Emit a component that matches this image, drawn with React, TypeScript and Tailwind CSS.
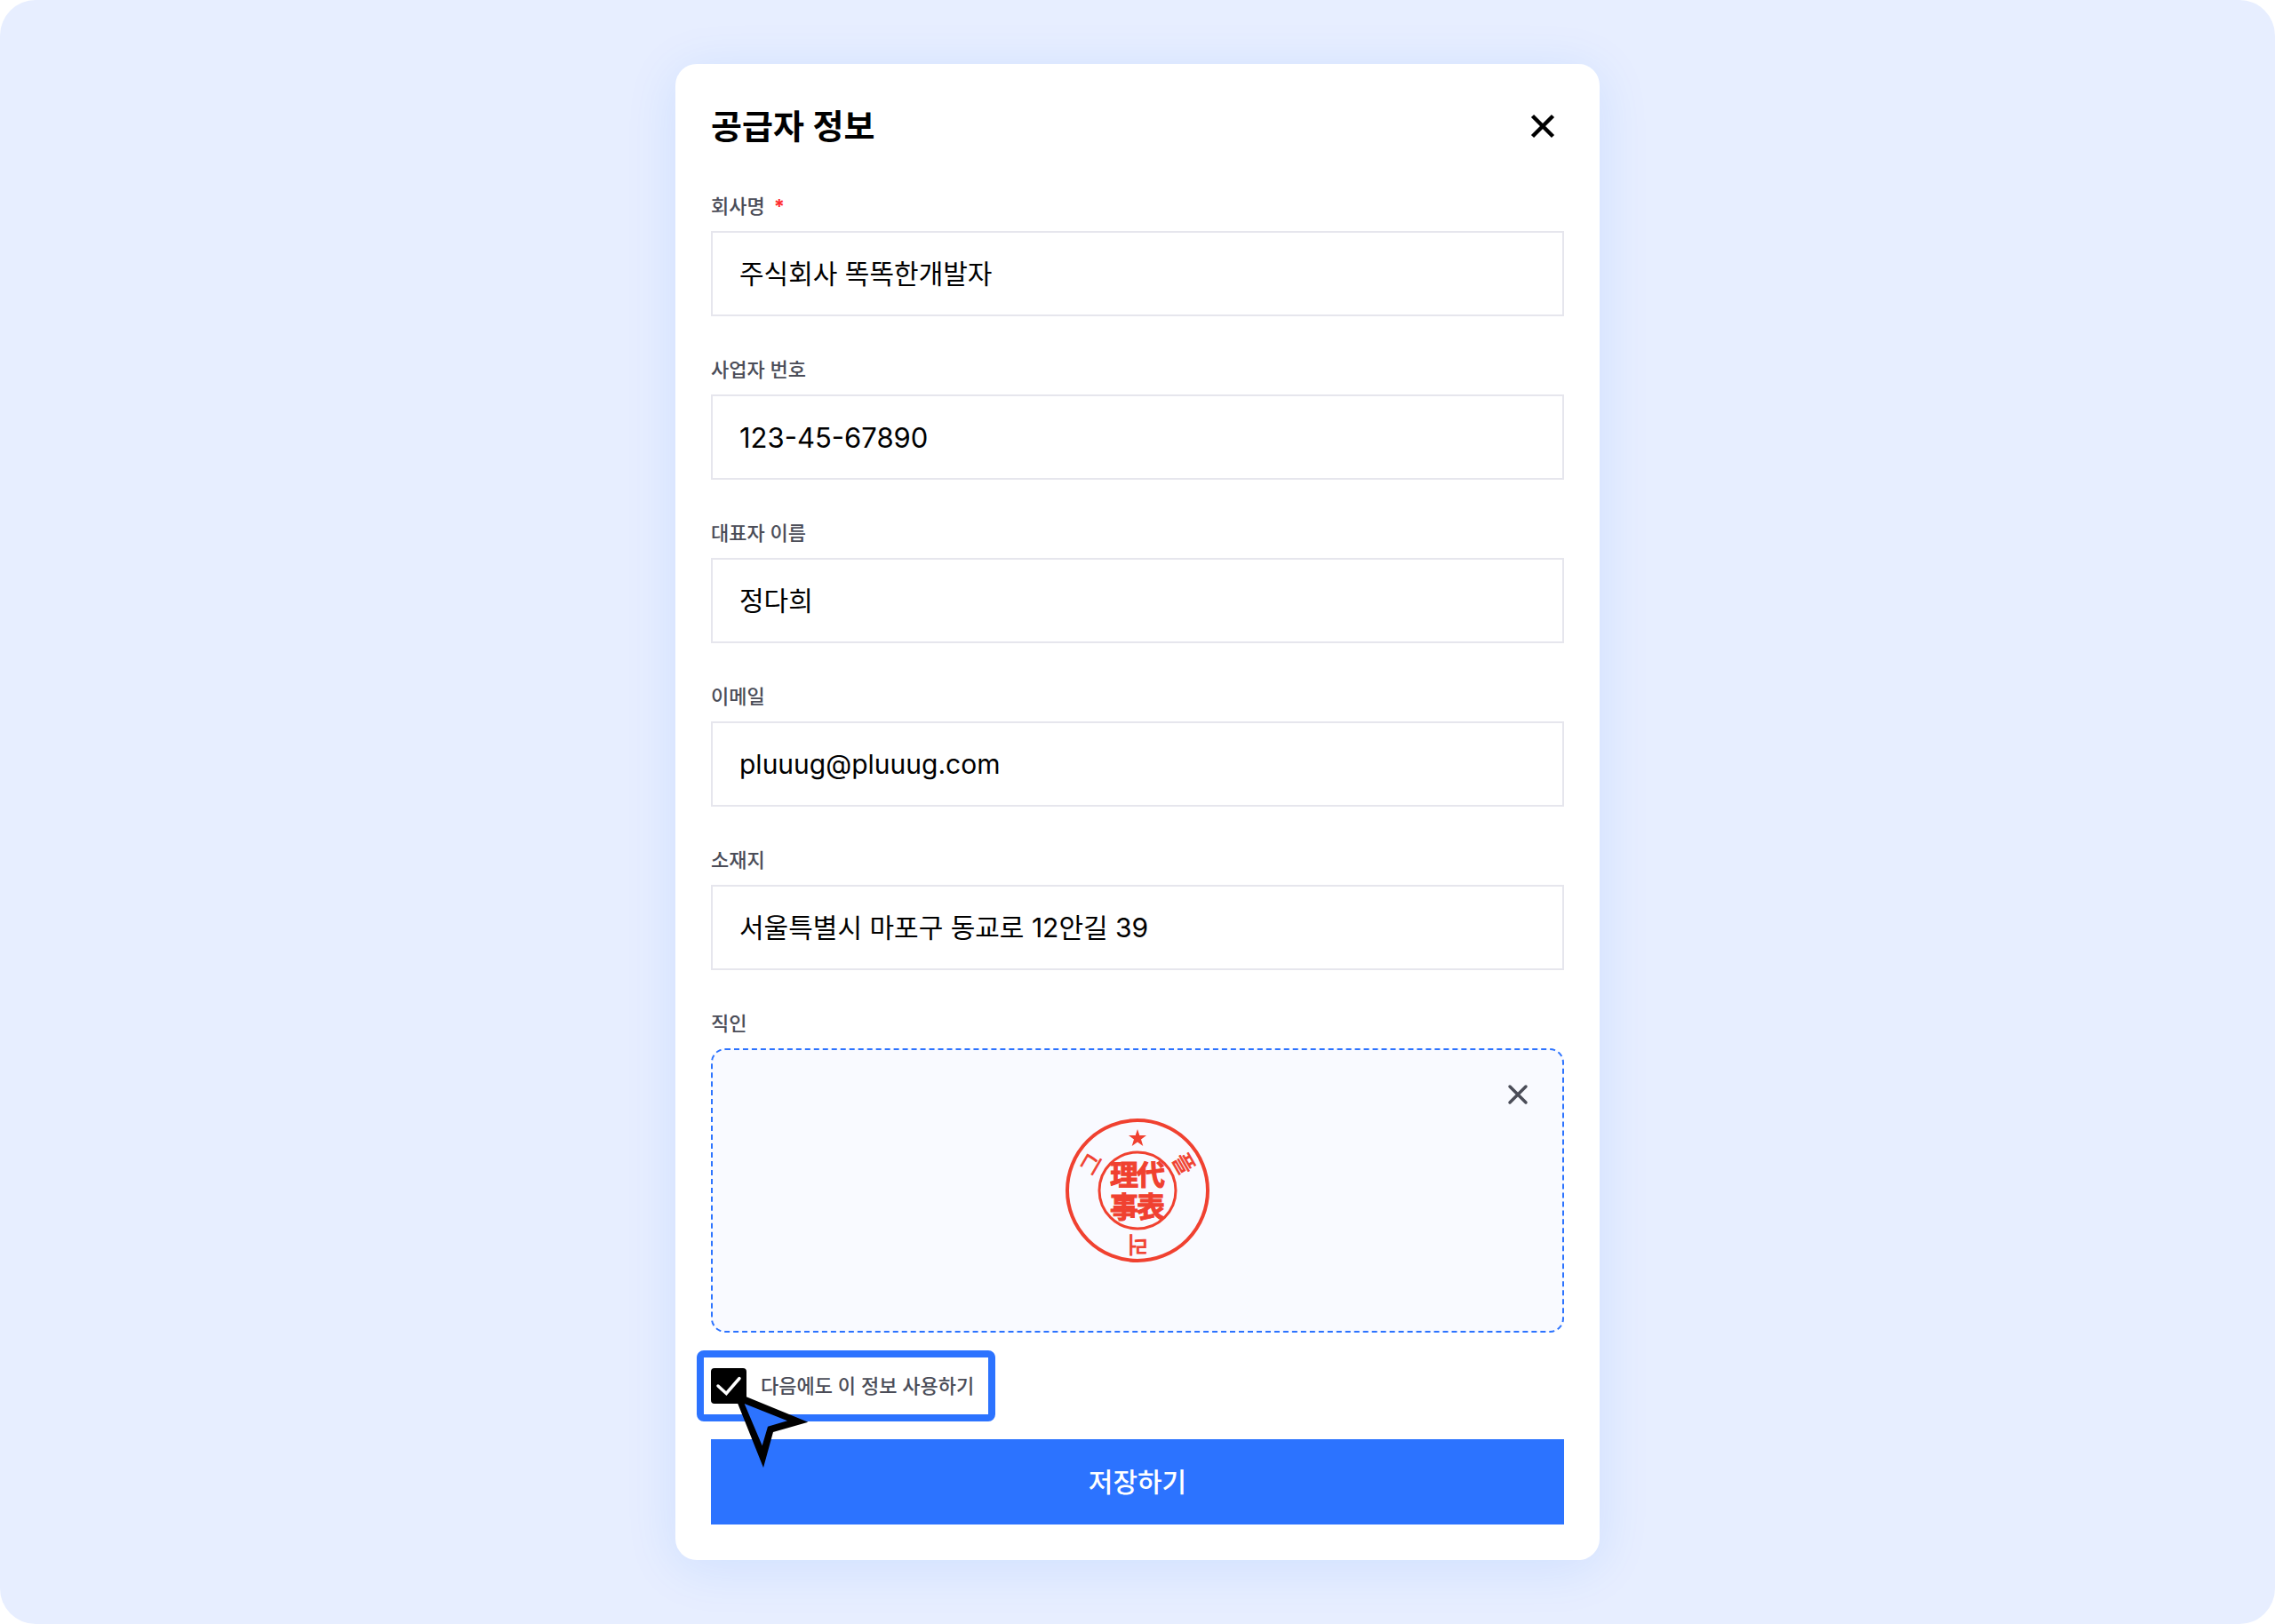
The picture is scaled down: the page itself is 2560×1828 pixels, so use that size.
import { useState } from "react"

type Field = {
  id: string
  label: string
  value: string
  type?: string
  required?: boolean
  inputClass: string
}

const FIELDS: Field[] = [
  { id: "company", label: "회사명", value: "주식회사 똑똑한개발자", required: true, inputClass: "pb-1 text-[30px]" },
  { id: "bizNumber", label: "사업자 번호", value: "123-45-67890", inputClass: "text-[31px]" },
  { id: "owner", label: "대표자 이름", value: "정다희", inputClass: "pb-1 text-[30px]" },
  { id: "email", label: "이메일", value: "pluuug@pluuug.com", type: "email", inputClass: "text-[30px]" },
  { id: "address", label: "소재지", value: "서울특별시 마포구 동교로 12안길 39", inputClass: "pb-1 text-[30px]" },
]

const labelClass = "text-[22px] leading-8 font-medium text-[#4b4d58]"

function Seal() {
  return (
    <svg
      viewBox="-84 -84 168 168"
      className="size-[168px] font-bold"
      fill="#f04130"
      textAnchor="middle"
      role="img"
      aria-label="직인"
    >
      <circle r="79" fill="none" stroke="#f04130" strokeWidth="4" />
      <circle r="43" fill="none" stroke="#f04130" strokeWidth="3" />
      <path d="M0-69 2.3-62H10L4-57.5 6.3-50 0-54.5-6.3-50-4-57.5-10-62H-2.3Z" />

      {/* inner characters */}
      <g fontSize="32" stroke="#f04130" strokeWidth="1">
        <text x="-15" y="-6">理</text>
        <text x="15" y="-6">代</text>
        <text x="-15" y="30">事</text>
        <text x="15" y="30">表</text>
      </g>

      {/* name running round the ring */}
      <g fontSize="25" className="font-normal" stroke="#f04130" strokeWidth="0.8">
        <text y="-51" transform="rotate(60)">플</text>
        <text y="-51" transform="rotate(-60)">그</text>
        <text y="-52" transform="rotate(180)">러</text>
      </g>
    </svg>
  )
}

export default function App() {

  const [values, setValues] = useState<Record<string, string>>(
    Object.fromEntries(FIELDS.map((f) => [f.id, f.value]))
  )
  const [hasSeal, setHasSeal] = useState(true)
  const [remember, setRemember] = useState(true)

  return (
    <main className="flex min-h-screen items-center justify-center rounded-[40px] bg-[#e7eeff] px-6 py-[72px] font-['Inter','Noto_Sans_CJK_KR',sans-serif]">

      <form
        onSubmit={(e) => e.preventDefault()}
        className="flex w-full max-w-[1040px] flex-col gap-5 rounded-3xl bg-white p-10 shadow-[0_8px_60px_rgba(0,110,255,0.11)]"
      >

        <div className="flex flex-col gap-11">

          {/* Header */}
          <div className="flex h-[60px] items-center justify-between">
            <h1 className="text-[38px] font-semibold text-black">공급자 정보</h1>
            <button type="button" aria-label="닫기">
              <svg viewBox="0 0 48 48" className="size-12" fill="none" stroke="#000" strokeWidth="4.5">
                <path d="M12.5 12.5l23 23M35.5 12.5l-23 23" />
              </svg>
            </button>
          </div>

          {/* Fields */}
          {FIELDS.map((f) => (
            <div key={f.id} className="flex flex-col gap-3">
              <label htmlFor={f.id} className={labelClass}>
                {f.label}
                {f.required && <span className="ml-2.5 font-bold text-[#ff2d2d]">*</span>}
              </label>
              <input
                id={f.id}
                type={f.type ?? "text"}
                value={values[f.id]}
                onChange={(e) => setValues({ ...values, [f.id]: e.target.value })}
                className={`h-24 w-full border-2 border-[#e6e6ed] px-[30px] text-black outline-none ${f.inputClass}`}
              />
            </div>
          ))}

          {/* Seal */}
          <div className="flex flex-col gap-3">
            <span className={labelClass}>직인</span>
            <div className="relative flex h-80 items-center justify-center rounded-2xl border-2 border-dashed border-[#2c73ff] bg-[#f9faff]">
              {hasSeal && <Seal />}
              <button
                type="button"
                aria-label="직인 삭제"
                onClick={() => setHasSeal(false)}
                className="absolute top-[30px] right-[30px]"
              >
                <svg viewBox="0 0 40 40" className="size-10" fill="none" stroke="#4b4d58" strokeWidth="3.5" strokeLinecap="round">
                  <path d="M11 11l18 18M29 11l-18 18" />
                </svg>
              </button>
            </div>
          </div>

        </div>

        {/* Remember */}
        <div className="relative -ml-4 flex h-20 w-[336px] items-center rounded-lg border-8 border-[#2c73ff] px-2">
          <label className="flex items-center gap-4">
            <span className="grid shrink-0 place-items-center">
              <input
                type="checkbox"
                checked={remember}
                onChange={(e) => setRemember(e.target.checked)}
                className="col-start-1 row-start-1 size-10 appearance-none rounded border-2 border-black checked:bg-black"
              />
              <svg viewBox="0 0 40 40" className="pointer-events-none col-start-1 row-start-1 size-10" fill="none" stroke="#fff" strokeWidth="3.5" strokeLinecap="round">
                <path d="M8 20l9.300 8.500L32 11.500" />
              </svg>
            </span>
            <span className={`whitespace-nowrap ${labelClass}`}>다음에도 이 정보 사용하기</span>
          </label>

          {/* Pointer */}
          <svg viewBox="0 0 258 258" className="pointer-events-none absolute top-[38px] left-8 size-[86px]">
            <path d="M2 0 256 104 138 138 105 258Z" fill="#000" />
            <path d="M41 42 186 100 120 119 101 184Z" fill="#2c73ff" />
          </svg>
        </div>

        <button type="submit" className="h-24 w-full bg-[#2c73ff] text-[30px] font-medium text-white">
          저장하기
        </button>

      </form>

    </main>
  )
}
